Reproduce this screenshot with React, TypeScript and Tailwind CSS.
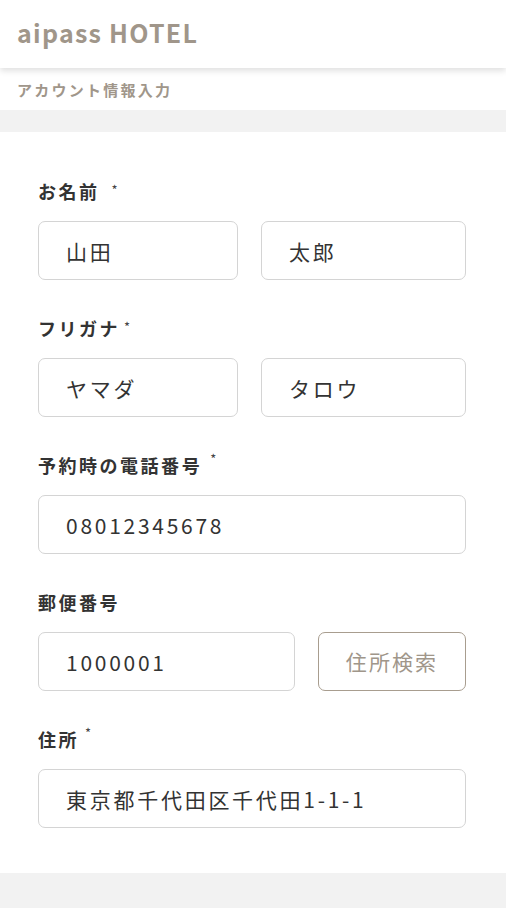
import React from "react";

const font = { fontFamily: '"Noto Sans CJK JP", "Noto Sans", sans-serif' };

type LabelProps = { text: string; required?: boolean; gap?: string; raise?: boolean };

const FieldLabel: React.FC<LabelProps> = ({ text, required, gap = "ml-2", raise }) => (
  <div className="flex items-center h-[24px] text-[18px] font-bold tracking-[0.14em] text-[#333333]">
    <span>{text}</span>
    {required && (
      <span className={`${gap} text-[13px] font-normal tracking-normal text-[#444444] ${raise ? "-mt-[12px]" : "-mt-[2px]"}`}>*</span>
    )}
  </div>
);

const TextBox: React.FC<{ value: string; className?: string }> = ({ value, className = "" }) => (
  <input
    defaultValue={value}
    className={`h-[59px] min-w-0 rounded-[7px] border-[1.5px] border-[#d4d4d4] bg-white pl-[27px] pr-3 text-[21px] tracking-[0.13em] text-[#333333] outline-none ${className}`}
  />
);

const Section: React.FC<{ children: React.ReactNode; last?: boolean }> = ({ children, last }) => (
  <div className={`flex flex-col gap-[18px] ${last ? "" : "mb-[36px]"}`}>{children}</div>
);

export default function App() {
  return (
    <div className="min-h-[908px] bg-[#f2f2f2]" style={font}>
      {/* header */}
      <header className="relative z-10 h-[68px] bg-white shadow-[0_3px_6px_rgba(0,0,0,0.12)] flex items-center pl-[17px]">
        <h1 className="text-[25px] font-bold tracking-[0.05em] text-[#a0968a] leading-none -mt-[4px]">aipass HOTEL</h1>
      </header>

      <div className="h-[42px] bg-white flex items-center pl-[17px]">
        <span className="text-[15px] font-bold tracking-[0.15em] text-[#a0968a] mt-[2px]">アカウント情報入力</span>
      </div>

      <div className="h-[22px]" />

      {/* form */}
      <main className="bg-white pt-[47px] pb-[45px] pl-[38px] pr-[40px]">
        <Section>
          <FieldLabel text="お名前" required gap="ml-[12px]" />
          <div className="flex gap-[23px]">
            <TextBox value="山田" className="w-[200px]" />
            <TextBox value="太郎" className="flex-1" />
          </div>
        </Section>

        <Section>
          <FieldLabel text="フリガナ" required gap="ml-[4px]" />
          <div className="flex gap-[23px]">
            <TextBox value="ヤマダ" className="w-[200px]" />
            <TextBox value="タロウ" className="flex-1" />
          </div>
        </Section>

        <Section>
          <FieldLabel text="予約時の電話番号" required gap="ml-[8px]" raise />
          <TextBox value="08012345678" className="w-full" />
        </Section>

        <Section>
          <FieldLabel text="郵便番号" />
          <div className="flex gap-[23px]">
            <TextBox value="1000001" className="flex-1" />
            <button className="w-[148px] h-[59px] rounded-[7px] border-[1.5px] border-[#a89d8f] bg-white text-[21px] tracking-[0.1em] text-[#a0968a]">
              住所検索
            </button>
          </div>
        </Section>

        <Section last>
          <FieldLabel text="住所" required gap="ml-[6px]" raise />
          <TextBox value="東京都千代田区千代田1-1-1" className="w-full" />
        </Section>
      </main>
    </div>
  );
}
